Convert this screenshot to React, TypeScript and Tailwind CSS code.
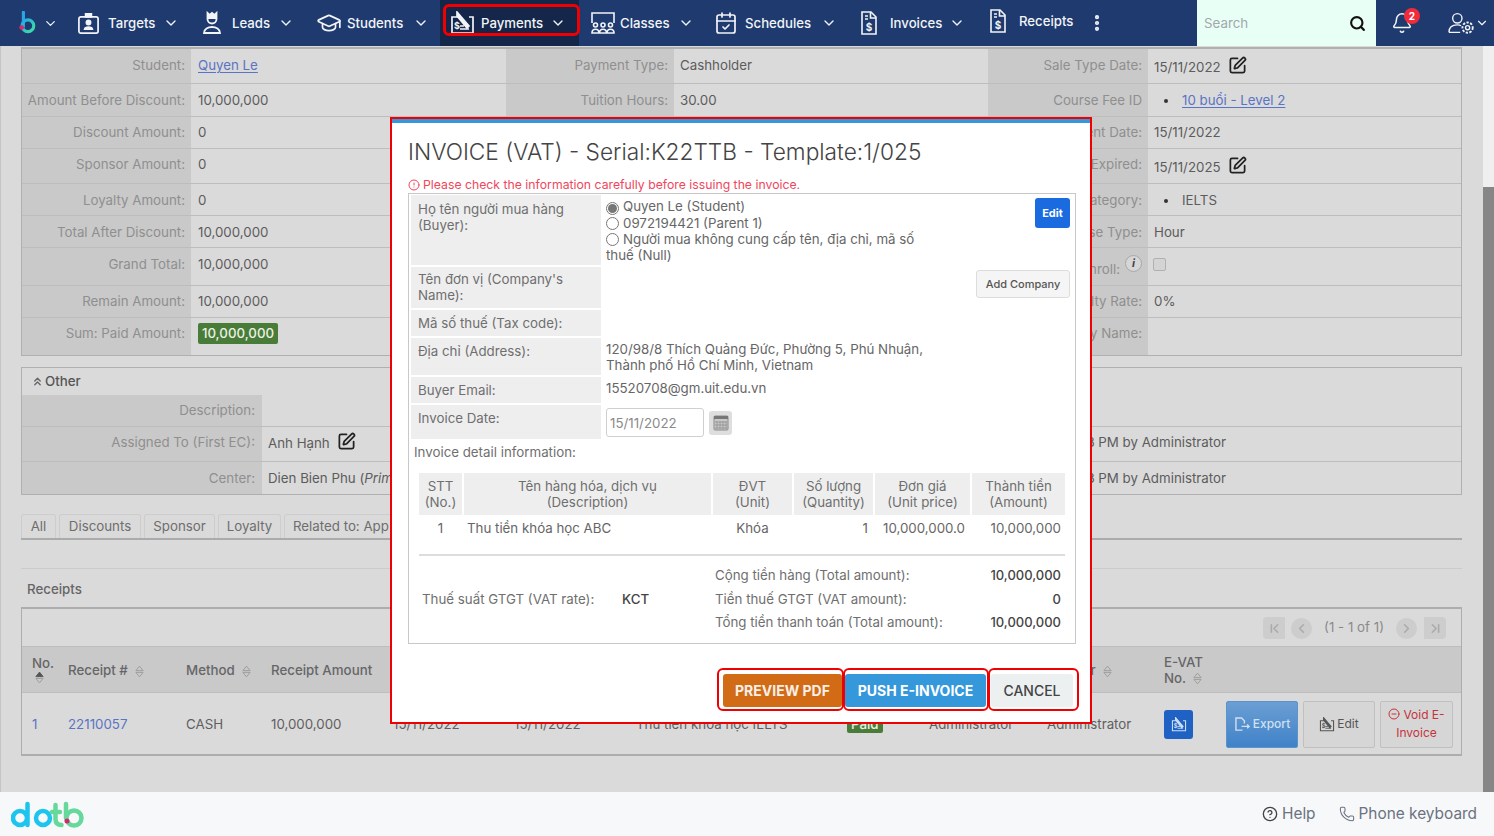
import type { ReactNode } from "react";
import {
  CalendarCheck,
  ChevronDown,
  ChevronFirst,
  ChevronLast,
  ChevronLeft,
  ChevronRight,
  ChevronsUp,
  CircleAlert,
  CircleHelp,
  CircleMinus,
  EllipsisVertical,
  GraduationCap,
  Phone,
  Search,
  Bell,
  SquarePen,
} from "lucide-react";

function BadgeIcon() {
  return (
    <svg viewBox="0 0 24 24" className="h-[23px] w-[23px]" fill="none" stroke="currentColor" strokeWidth="1.8">
      <rect x="2" y="5" width="20" height="17" rx="2" />
      <path d="M9 5V2h6v3z" fill="currentColor" />
      <circle cx="12" cy="11" r="2.2" fill="currentColor" />
      <path d="M8 18c.5-3 7.500-3 8 0z" fill="currentColor" />
    </svg>
  );
}

function LeadIcon() {
  return (
    <svg viewBox="0 0 20 24" className="h-[24px] w-[20px]" fill="none" stroke="currentColor" strokeWidth="1.8">
      <path d="M5.500 2l2 2 2.500-2 2.500 2 2-2v5h-9z" fill="currentColor" />
      <path d="M5.500 8c0 6 9 6 9 0" />
      <path d="M2 22c0-8 16-8 16 0z" />
    </svg>
  );
}

function PaymentIcon({ className = "h-[24px] w-[25px]" }: { className?: string }) {
  return (
    <svg viewBox="0 0 25 24" className={className} fill="none" stroke="currentColor" strokeWidth="1.7">
      <path d="M8 6H2v16h21V6h-4" />
      <path d="M7 1l12 14-2 2L7 5z" fill="currentColor" />
      <text x="4" y="18" fontSize="9" fontWeight="700" fill="currentColor" stroke="none">$</text>
      <path d="M10 15h4M10 18h9" strokeWidth="1.4" />
    </svg>
  );
}

function ClassIcon() {
  return (
    <svg viewBox="0 0 24 24" className="h-[24px] w-[24px]" fill="none" stroke="currentColor" strokeWidth="1.600">
      <path d="M1 12V2h22v10" />
      <circle cx="4.500" cy="14" r="2" />
      <circle cx="12" cy="14" r="2" />
      <circle cx="19.500" cy="14" r="2" />
      <path d="M1 22c0-5 7-5 7 0zM8.500 22c0-5 7-5 7 0zM16 22c0-5 7-5 7 0z" />
    </svg>
  );
}

function BillIcon() {
  return (
    <svg viewBox="0 0 16 24" className="h-[24px] w-[16px]" fill="none" stroke="currentColor" strokeWidth="1.600">
      <path d="M1 1h9l5 5v17H1z" />
      <path d="M9.500 1v6h5.500" />
      <path d="M4 5h3M4 8h3" />
      <text x="8" y="20" textAnchor="middle" fontSize="10" fontWeight="700" fill="currentColor" stroke="none">$</text>
    </svg>
  );
}

function SortIcon({ up = false }: { up?: boolean }) {
  return (
    <svg viewBox="0 0 10 14" className="h-[13px] w-[9px]">
      <path d="M5 1l4 5H1z" fill={up ? "#555" : "none"} stroke={up ? "#555" : "#9a9a9a"} strokeWidth="1" />
      <path d="M5 13l4-5H1z" fill="none" stroke="#9a9a9a" strokeWidth="1" />
    </svg>
  );
}

function UserGearIcon() {
  return (
    <svg viewBox="0 0 30 24" className="h-[24px] w-[28px]" fill="none" stroke="currentColor" strokeWidth="1.500">
      <circle cx="10" cy="7" r="5" />
      <path d="M1 22c0-6 4-8 9-8 2 0 3 .3 4 1M1 22h12" />
      <circle cx="21" cy="17" r="2.200" />
      <circle cx="21" cy="17" r="5.500" strokeDasharray="2.500 1.500" strokeWidth="2" />
    </svg>
  );
}

function NavLogo() {
  return (
    <svg viewBox="0 0 20 26" className="h-[24px] w-[18px]" fill="none">
      <defs>
        <linearGradient id="navb" x1="0" y1="0" x2="1" y2="1">
          <stop offset="0" stopColor="#22a8e8" />
          <stop offset="1" stopColor="#3fe0a0" />
        </linearGradient>
      </defs>
      <path d="M6 1v16" stroke="#2aa6e6" strokeWidth="3.500" strokeLinecap="round" />
      <circle cx="11" cy="16" r="6.500" stroke="url(#navb)" strokeWidth="3.500" />
      <circle cx="4" cy="18" r="2.600" fill="#d8246a" />
    </svg>
  );
}

function FooterLogo() {
  return (
    <svg viewBox="0 0 74 27" className="h-[27px] w-[74px]" fill="none" strokeWidth="4.500" strokeLinecap="round">
      <circle cx="9" cy="17" r="7" stroke="#1cc4ee" />
      <path d="M16.500 3v21" stroke="#1cc4ee" />
      <circle cx="32" cy="17" r="7" stroke="#1cc4ee" />
      <path d="M44.500 4v14c0 4 2 6 6 6M41 11h8" stroke="#66d89c" />
      <path d="M55 3v14" stroke="#66d89c" />
      <circle cx="63" cy="17" r="7.500" stroke="#66d89c" />
      <circle cx="56" cy="20" r="2.500" fill="#d8246a" stroke="none" />
    </svg>
  );
}

type NavItem = { label: string; icon: ReactNode; box: string; gap: string; chev: string; active?: boolean };

const NAV: NavItem[] = [
  { label: "Targets", icon: <BadgeIcon />, box: "w-[124px] pl-[11px]", gap: "ml-[8px] pt-[2px]", chev: "ml-[8px]" },
  { label: "Leads", icon: <LeadIcon />, box: "w-[115px] pl-[12px]", gap: "ml-[10px] pt-[2px]", chev: "ml-[8px]" },
  { label: "Students", icon: <GraduationCap size={26} strokeWidth={1.6} />, box: "w-[135px] pl-[11px]", gap: "ml-[5px] pt-[2px]", chev: "ml-[10px]" },
  { label: "Payments", icon: <PaymentIcon />, box: "w-[139px] pl-[10px] bg-[#14274a]", gap: "ml-[6px] pt-[2px]", chev: "ml-[7px]", active: true },
  { label: "Classes", icon: <ClassIcon />, box: "w-[125px] pl-[12px]", gap: "ml-[5px] pt-[2px]", chev: "ml-[8px]" },
  { label: "Schedules", icon: <CalendarCheck size={24} strokeWidth={1.7} />, box: "w-[144px] pl-[10px]", gap: "ml-[7px] pt-[2px]", chev: "ml-[10px]" },
  { label: "Invoices", icon: <BillIcon />, box: "w-[129px] pl-[13px]", gap: "ml-[13px] pt-[2px]", chev: "ml-[7px]" },
];

function Header() {
  return (
    <header className="flex h-[46px] shrink-0 items-stretch bg-[#1e3a6e] text-[#f2f4f8]">
      <div className="flex w-[66px] items-center pl-[18px]">
        <NavLogo />
        <ChevronDown size={15} className="ml-[7px]" />
      </div>
      {NAV.map((item) => (
        <div key={item.label} className={`relative flex items-center text-[13.200px] font-medium ${item.box}`}>
          {item.icon}
          <span className={item.gap}>{item.label}</span>
          <ChevronDown size={16} className={item.chev} />
          {item.active && (
            <div className="absolute top-[4px] left-[3px] h-[32px] w-[137px] rounded-[6px] border-[3px] border-[#f00000]" />
          )}
        </div>
      ))}
      <div className="flex w-[111px] items-center pb-[4px] pl-[13px] text-[13.200px] font-medium">
        <BillIcon />
        <span className="ml-[13px] pt-[2px]">Receipts</span>
      </div>
      <div className="flex w-[109px] items-center pb-[1px]">
        <EllipsisVertical size={20} strokeWidth={3} className="-ml-[1px]" />
      </div>
      <div className="flex w-[179px] items-center bg-[#e8fff5] pr-[10px] pl-[7px] text-[13.300px] text-[#a2a8ac]">
        <span className="flex-1 pt-[2px]">Search</span>
        <Search size={17} strokeWidth={3} className="text-[#111]" />
      </div>
      <div className="relative flex w-[72px] items-center pl-[15px]">
        <Bell size={22} strokeWidth={1.7} />
        <span className="absolute top-[8px] left-[28px] flex h-[16px] w-[16px] items-center justify-center rounded-full bg-[#ef2b3c] text-[10px] font-bold text-white">
          2
        </span>
      </div>
      <div className="flex flex-1 items-center">
        <UserGearIcon />
        <ChevronDown size={14} className="-ml-[1px]" />
      </div>
    </header>
  );
}

function EditMark() {
  return <SquarePen size={19} strokeWidth={2.2} className="ml-[7px] inline-block text-[#222]" />;
}

function Bullet({ children }: { children: ReactNode }) {
  return (
    <span className="flex items-center pl-[10px]">
      <span className="mr-[14px] h-[4px] w-[4px] rounded-full bg-[#333]" />
      {children}
    </span>
  );
}

const LINK = "text-[#5a74c4] underline underline-offset-2";

type SummaryRow = { h: string; t: string; a: [string, ReactNode]; b?: [string, ReactNode]; c: [ReactNode, ReactNode] };

const SUMMARY: SummaryRow[] = [
  {
    h: "h-[35px]",
    t: "pt-[8px]",
    a: ["Student:", <span className={LINK}>Quyen Le</span>],
    b: ["Payment Type:", "Cashholder"],
    c: ["Sale Type Date:", <span className="flex items-center pt-[2px]">15/11/2022<span className="-mt-[5px]"><EditMark /></span></span>],
  },
  {
    h: "h-[33px]",
    t: "pt-[8px]",
    a: ["Amount Before Discount:", "10,000,000"],
    b: ["Tuition Hours:", "30.00"],
    c: ["Course Fee ID", <Bullet><span className={LINK}>10 buổi - Level 2</span></Bullet>],
  },
  { h: "h-[32px]", t: "pt-[7px]", a: ["Discount Amount:", "0"], c: ["Payment Date:", "15/11/2022"] },
  {
    h: "h-[35px]",
    t: "pt-[7px]",
    a: ["Sponsor Amount:", "0"],
    c: ["Payment Expired:", <span className="flex items-center pt-[3px]">15/11/2025<span className="-mt-[5px]"><EditMark /></span></span>],
  },
  { h: "h-[32px]", t: "pt-[8px]", a: ["Loyalty Amount:", "0"], c: ["Course Category:", <Bullet>IELTS</Bullet>] },
  { h: "h-[32px]", t: "pt-[8px]", a: ["Total After Discount:", "10,000,000"], c: ["Course Type:", "Hour"] },
  {
    h: "h-[38px]",
    t: "pt-[8px]",
    a: ["Grand Total:", "10,000,000"],
    c: [
      <span className="flex items-start">
        <span className="mt-[5px]">Is Enroll:</span>
        <span className="-mt-[1px] ml-[5px] flex h-[17px] w-[17px] items-center justify-center rounded-full border border-[#a8a8a8] bg-[#d6d6d6] text-[11px] font-bold text-[#444] italic">
          i
        </span>
      </span>,
      <span className="mt-[2px] -ml-[1px] block h-[13px] w-[13px] rounded-[2px] border border-[#b0b0b0] bg-[#d4d4d4]" />,
    ],
  },
  { h: "h-[32px]", t: "pt-[7px]", a: ["Remain Amount:", "10,000,000"], c: ["Loyalty Rate:", "0%"] },
  {
    h: "h-[37px]",
    t: "pt-[7px]",
    a: [
      "Sum: Paid Amount:",
      <span className="-mt-[2px] block w-[80px] rounded-[2px] bg-[#4a7c39] py-[2px] text-center font-medium text-[#eaf2e4]">10,000,000</span>,
    ],
    c: ["Company Name:", ""],
  },
];

function Pair({ label, value, labelW, valueW, pad, top }: { label: ReactNode; value: ReactNode; labelW: string; valueW: string; pad: string; top: string }) {
  return (
    <>
      <div className={`flex items-start justify-end bg-[#c9c9c9] pr-[6px] leading-[17px] text-[#8f8f8f] ${top} ${labelW}`}>{label}</div>
      <div className={`leading-[17px] text-[#5c5c5c] ${top} ${pad} ${valueW}`}>{value}</div>
    </>
  );
}

function SummaryPanel() {
  return (
    <div className="mt-[1px] flex flex-col border-t-2 border-r border-b border-l border-[#b0b0b0]">
      {SUMMARY.map((row) => (
        <div key={row.a[0]} className={`flex border-b border-[#bdbdbd] last:border-b-0 ${row.h}`}>
          <Pair top={row.t} label={row.a[0]} value={row.a[1]} labelW="w-[169px]" valueW="w-[315px]" pad="pl-[7px]" />
          <Pair top={row.t} label={row.b?.[0] ?? ""} value={row.b?.[1] ?? ""} labelW="w-[168px]" valueW="w-[314px]" pad="pl-[6px]" />
          <Pair top={row.t} label={row.c[0]} value={row.c[1]} labelW="w-[160px]" valueW="flex-1" pad="pl-[6px]" />
        </div>
      ))}
    </div>
  );
}

const OTHER: { label: string; value: ReactNode; audit?: string; h: string; shift: string }[] = [
  { label: "Description:", value: "", h: "h-[32px]", shift: "" },
  {
    label: "Assigned To (First EC):",
    value: (
      <span className="flex items-center pt-[3px]">
        Anh Hạnh<span className="-mt-[5px]"><EditMark /></span>
      </span>
    ),
    audit: "3 PM by Administrator",
    h: "h-[35px]",
    shift: "pb-[3px]",
  },
  {
    label: "Center:",
    value: (
      <span>
        Dien Bien Phu (<em>Prim</em>
      </span>
    ),
    audit: "3 PM by Administrator",
    h: "h-[32px]",
    shift: "pt-[1px]",
  },
];

function OtherPanel() {
  return (
    <div className="mt-[11px] border border-[#b0b0b0]">
      <div className="flex h-[27px] items-center pl-[9px] font-medium text-[#555]">
        <ChevronsUp size={13} strokeWidth={2.5} className="text-[#666]" />
        <span className="ml-[1px]">Other</span>
      </div>
      {OTHER.map((row) => (
        <div key={row.label} className={`flex border-b border-[#bdbdbd] last:border-b-0 ${row.h}`}>
          <div className={`flex w-[240px] items-center justify-end bg-[#c9c9c9] pr-[7px] text-[#8f8f8f] ${row.shift}`}>{row.label}</div>
          <div className={`flex w-[400px] items-center pl-[6px] text-[#5c5c5c] ${row.shift}`}>{row.value}</div>
          <div className={`flex flex-1 items-center justify-end pr-[235px] text-[#5c5c5c] ${row.shift}`}>{row.audit}</div>
        </div>
      ))}
    </div>
  );
}

const TABS = [
  { label: "All", w: "w-[35px] justify-center" },
  { label: "Discounts", w: "w-[82px] justify-center" },
  { label: "Sponsor", w: "w-[71px] justify-center" },
  { label: "Loyalty", w: "w-[63px] justify-center" },
  { label: "Related to: App", w: "w-[190px] pl-[8px]" },
];

function Tabs() {
  return (
    <div className="mt-[19px] flex h-[26px] items-stretch gap-[3px] border-b-2 border-[#ababab]">
      {TABS.map((t) => (
        <div
          key={t.label}
          className={`flex items-center rounded-t-[3px] border-t border-r border-l border-[#cdcdcd] pt-[1px] whitespace-nowrap text-[#6e6e6e] ${t.w}`}
        >
          {t.label}
        </div>
      ))}
    </div>
  );
}

function HeadCell({ w, children, sort, up }: { w: string; children: ReactNode; sort?: boolean; up?: boolean }) {
  return (
    <div className={`flex shrink-0 items-center gap-[7px] pt-[4px] pl-[8px] font-medium text-[#666] ${w}`}>
      <span className="whitespace-nowrap">{children}</span>
      {sort && <SortIcon up={up} />}
    </div>
  );
}

function ReceiptsTable() {
  return (
    <div className="mt-[7px] border-t-2 border-r border-b-2 border-l border-[#adadad]">
      <div className="flex h-[38px] items-center justify-end border-b border-[#bdbdbd] pt-[2px] pr-[15px] text-[#8a8a8a]">
        <span className="flex h-[22px] w-[22px] items-center justify-center rounded-l-[4px] bg-[#cdcdcd] text-[#aaa]"><ChevronFirst size={15} strokeWidth={2.5} /></span>
        <span className="ml-[6px] flex h-[21px] w-[21px] items-center justify-center rounded-full bg-[#cdcdcd] text-[#aaa]"><ChevronLeft size={15} strokeWidth={2.5} /></span>
        <span className="mx-[12px]">(1 - 1 of 1)</span>
        <span className="flex h-[21px] w-[21px] items-center justify-center rounded-full bg-[#cdcdcd] text-[#aaa]"><ChevronRight size={15} strokeWidth={2.5} /></span>
        <span className="ml-[7px] flex h-[22px] w-[22px] items-center justify-center rounded-r-[4px] bg-[#cdcdcd] text-[#aaa]"><ChevronLast size={15} strokeWidth={2.5} /></span>
      </div>
      <div className="flex h-[46px] border-b border-[#bdbdbd] bg-[#c9c9ca]">
        <div className="flex w-[38px] shrink-0 flex-col pt-[8px] pl-[10px] leading-[16px] font-medium text-[#666]">
          No.
          <span className="pl-[3px]"><SortIcon up /></span>
        </div>
        <HeadCell w="w-[118px]" sort>Receipt #</HeadCell>
        <HeadCell w="w-[85px]" sort>Method</HeadCell>
        <HeadCell w="w-[122px]">Receipt Amount</HeadCell>
        <HeadCell w="w-[121px]">Receipt Date</HeadCell>
        <HeadCell w="w-[122px]">Paid Date</HeadCell>
        <HeadCell w="w-[211px]">Description</HeadCell>
        <HeadCell w="w-[82px]">Status</HeadCell>
        <HeadCell w="w-[118px]">Created By</HeadCell>
        <HeadCell w="w-[117px]" sort>Cashier</HeadCell>
        <div className="flex w-[62px] shrink-0 flex-col justify-center pt-[2px] pl-[8px] leading-[16px] font-medium text-[#666]">
          E-VAT
          <span className="flex items-center gap-[7px]">No. <SortIcon /></span>
        </div>
      </div>
      <div className="flex h-[61px] items-center pt-[4px] text-[#5f5f5f]">
        <div className="w-[38px] shrink-0 pl-[10px] text-[#5a74c4]">1</div>
        <div className="w-[118px] shrink-0 pl-[8px] text-[#5a74c4]">22110057</div>
        <div className="w-[85px] shrink-0 pl-[8px]">CASH</div>
        <div className="w-[122px] shrink-0 pl-[8px]">10,000,000</div>
        <div className="w-[121px] shrink-0 pl-[8px]">15/11/2022</div>
        <div className="w-[122px] shrink-0 pl-[8px]">15/11/2022</div>
        <div className="w-[211px] shrink-0 pl-[8px]">Thu tiền khóa học IELTS</div>
        <div className="w-[82px] shrink-0 pl-[8px]">
          <span className="rounded-[2px] bg-[#4a7c39] px-[4px] py-[1px] font-medium text-[#eaf2e4]">Paid</span>
        </div>
        <div className="w-[118px] shrink-0 pl-[8px]">Administrator</div>
        <div className="w-[117px] shrink-0 pl-[8px]">Administrator</div>
        <div className="-mt-[2px] w-[70px] shrink-0 pl-[8px]">
          <span className="flex h-[29px] w-[29px] items-center justify-center rounded-[3px] bg-[#1f62c4] text-[#cfe0f5]">
            <PaymentIcon className="h-[15px] w-[16px]" />
          </span>
        </div>
        <button className="-mt-[2px] flex h-[47px] w-[72px] items-center justify-center gap-[2px] rounded-[2px] border border-[#5d93cc] bg-gradient-to-b from-[#6b9ed4] to-[#3f82c8] text-[12px] font-medium text-[#cfe0f3]">
          <svg viewBox="0 0 18 16" className="h-[15px] w-[17px]" fill="none" stroke="currentColor" strokeWidth="1.500">
            <path d="M9 14H2V1h6l3 3v3" />
            <path d="M8 10h8M14 8l2 2-2 2" />
          </svg>
          Export
        </button>
        <button className="-mt-[2px] ml-[5px] flex h-[47px] w-[72px] items-center justify-center gap-[2px] rounded-[2px] border border-[#c0c0c0] bg-[#d6d6d6] text-[12px] text-[#555]">
          <PaymentIcon className="h-[15px] w-[16px]" />
          Edit
        </button>
        <button className="-mt-[2px] ml-[5px] h-[47px] w-[73px] rounded-[2px] border border-[#c0c0c0] bg-[#d6d6d6] text-[12px] leading-[18px] text-[#c4343c]">
          <CircleMinus size={12} className="mr-[3px] inline-block align-[-1px]" />
          Void E-<br />Invoice
        </button>
      </div>
    </div>
  );
}

function BuyerField({ label, h, first, children }: { label: ReactNode; h: string; first?: boolean; children?: ReactNode }) {
  return (
    <div className={`flex ${first ? "mt-[1px]" : "mt-[2px]"} ${h}`}>
      <div className="w-[190px] shrink-0 bg-[#eeeeee] pt-[5px] pl-[7px] leading-[16px] text-[#6f6f6f]">{label}</div>
      <div className="relative flex-1 pl-[5px] leading-[16px] text-[#666]">{children}</div>
    </div>
  );
}

function Radio({ on = false }: { on?: boolean }) {
  return (
    <span className="mr-[4px] inline-flex h-[13px] w-[13px] items-center justify-center rounded-full border border-[#777] align-[-2px]">
      {on && <span className="h-[9px] w-[9px] rounded-full bg-[#777]" />}
    </span>
  );
}

const DETAIL_HEAD: [string, string, string][] = [
  ["w-[43px]", "STT", "(No.)"],
  ["w-[247px]", "Tên hàng hóa, dịch vụ", "(Description)"],
  ["w-[79px]", "ĐVT", "(Unit)"],
  ["w-[79px]", "Số lượng", "(Quantity)"],
  ["w-[95px]", "Đơn giá", "(Unit price)"],
  ["flex-1", "Thành tiền", "(Amount)"],
];

function InvoiceModal() {
  return (
    <div className="absolute top-[117px] left-[390px] flex h-[607px] w-[702px] flex-col border-2 border-[#f00000] bg-white">
      <div className="h-[4px] shrink-0 bg-[#3498db]" />
      <div className="px-[16px]">
        <h2 className="mt-[14px] text-[22.700px] leading-[30px] font-light whitespace-nowrap text-[#444]">
          INVOICE (VAT) - Serial:K22TTB - Template:1/025
        </h2>
        <p className="mt-[10px] flex items-center gap-[3px] text-[12.250px] leading-[16px] text-[#f0465c]">
          <CircleAlert size={12} />
          Please check the information carefully before issuing the invoice.
        </p>
        <div className="h-[451px] w-[668px] border border-[#c8c8c8] px-[2px]">
          <BuyerField first label={<span className="block mt-[1px]">Họ tên người mua hàng<br />(Buyer):</span>} h="h-[70px]">
            <div className="w-[320px] pt-[3px]">
              <Radio on />Quyen Le (Student)<br />
              <Radio />0972194421 (Parent 1)<br />
              <Radio />Người mua không cung cấp tên, địa chỉ, mã số thuế (Null)
            </div>
            <button className="absolute top-[3px] right-[3px] h-[30px] w-[35px] rounded-[3px] bg-[#1a6ae0] text-[11px] font-bold text-white">
              Edit
            </button>
          </BuyerField>
          <BuyerField label={<span className="block -mt-[1px]">Tên đơn vị (Company's<br />Name):</span>} h="h-[41px]">
            <button className="absolute top-[3px] right-[3px] h-[28px] w-[94px] rounded-[3px] border border-[#ddd] bg-[#f5f5f5] text-[11px] font-medium text-[#555]">
              Add Company
            </button>
          </BuyerField>
          <BuyerField label="Mã số thuế (Tax code):" h="h-[26px]" />
          <BuyerField label="Địa chỉ (Address):" h="h-[37px]">
            <div className="w-[330px] pt-[3px]">120/98/8 Thích Quảng Đức, Phường 5, Phú Nhuận, Thành phố Hồ Chí Minh, Vietnam</div>
          </BuyerField>
          <BuyerField label="Buyer Email:" h="h-[26px]">
            <div className="pt-[3px]">15520708@gm.uit.edu.vn</div>
          </BuyerField>
          <BuyerField label="Invoice Date:" h="h-[34px]">
            <div className="flex items-start pt-[3px]">
              <div className="flex h-[29px] w-[98px] items-center rounded-[3px] border border-[#cfcfcf] pl-[3px] text-[#8a8a8a]">15/11/2022</div>
              <div className="mt-[3px] ml-[5px] flex h-[24px] w-[23px] items-center justify-center rounded-[3px] bg-[#dedede]">
                <svg viewBox="0 0 16 16" className="h-[16px] w-[16px]">
                  <rect x="1" y="1" width="14" height="14" rx="1" fill="#c8c8c8" stroke="#8a8a8a" />
                  <rect x="1" y="1" width="14" height="3" fill="#777" />
                  <path d="M4 6v8M7 6v8M10 6v8M13 6v8M2 7h12M2 10h12M2 13h12" stroke="#8f8f8f" strokeWidth="0.8" />
                </svg>
              </div>
            </div>
          </BuyerField>
          <p className="mt-[5px] pl-[3px] leading-[16px] text-[#6f6f6f]">Invoice detail information:</p>
          <div className="mx-[8px] mt-[13px]">
            <div className="flex gap-[2px] text-center leading-[16px] text-[#6f6f6f]">
              {DETAIL_HEAD.map(([w, a, b]) => (
                <div key={a} className={`h-[42px] bg-[#eeeeee] pt-[5px] ${w}`}>
                  {a}<br />{b}
                </div>
              ))}
            </div>
            <div className="flex h-[39px] items-start gap-[2px] pt-[5px] leading-[16px] text-[#666]">
              <div className="w-[43px] text-center">1</div>
              <div className="w-[247px] pl-[3px]">Thu tiền khóa học ABC</div>
              <div className="w-[79px] text-center">Khóa</div>
              <div className="w-[79px] pr-[5px] text-right">1</div>
              <div className="w-[95px] pr-[5px] text-right">10,000,000.0</div>
              <div className="flex-1 pr-[4px] text-right">10,000,000</div>
            </div>
            <div className="h-[2px] bg-[#dddddd]" />
            <div className="flex h-[72px] items-center pt-[13px] leading-[16px] text-[#6f6f6f]">
              <div className="w-[203px] pl-[3px]">Thuế suất GTGT (VAT rate):</div>
              <div className="w-[93px] font-medium text-[#444]">KCT</div>
              <div className="flex-1">
                <div className="flex h-[24px] items-center justify-between pr-[4px]">
                  Cộng tiền hàng (Total amount):<span className="text-[13px] font-medium text-[#444]">10,000,000</span>
                </div>
                <div className="flex h-[23px] items-center justify-between pr-[4px]">
                  Tiền thuế GTGT (VAT amount):<span className="text-[13px] font-medium text-[#444]">0</span>
                </div>
                <div className="flex h-[24px] items-center justify-between pr-[4px]">
                  Tổng tiền thanh toán (Total amount):<span className="text-[13px] font-medium text-[#444]">10,000,000</span>
                </div>
              </div>
            </div>
          </div>
        </div>
        <div className="mt-[24px] -mr-[5px] flex justify-end">
          <div className="rounded-[6px] border-2 border-[#f00000] pt-[4px] pb-[2px] pl-[4px]">
            <button className="h-[33px] w-[119px] rounded-[3px] bg-[#d16b16] text-[14px] font-bold text-[#f8efe6]">PREVIEW PDF</button>
          </div>
          <div className="-ml-[1px] rounded-[6px] border-2 border-[#f00000] pt-[4px] pr-[1px] pb-[2px]">
            <button className="h-[33px] w-[141px] rounded-[3px] bg-[#3498db] text-[14px] font-bold text-white">PUSH E-INVOICE</button>
          </div>
          <div className="-ml-[1px] rounded-[6px] border-2 border-[#f00000] pt-[4px] pr-[4px] pb-[2px] pl-[1px]">
            <button className="h-[33px] w-[82px] rounded-[3px] bg-[#ecf0f1] text-[14px] font-medium text-[#444]">CANCEL</button>
          </div>
        </div>
      </div>
    </div>
  );
}

function Footer() {
  return (
    <footer className="flex h-[44px] shrink-0 items-center justify-between bg-[#f7f8fa] pr-[17px] pl-[11px] text-[15.400px] text-[#6b7280]">
      <FooterLogo />
      <div className="flex items-center">
        <CircleHelp size={16} strokeWidth={2} className="mr-[4px] text-[#444]" />
        Help
        <Phone size={16} strokeWidth={1.600} className="mr-[4px] ml-[23px]" />
        Phone keyboard
      </div>
    </footer>
  );
}

export default function App() {
  return (
    <div className="relative flex h-[836px] w-[1494px] flex-col overflow-hidden bg-[#dadada] font-[Inter,sans-serif] text-[13.300px]">
      <Header />
      <div className="flex min-h-0 flex-1">
        <main className="min-w-0 flex-1 border-l border-[#c4c4c4] pr-[21px] pl-[20px]">
          <SummaryPanel />
          <OtherPanel />
          <Tabs />
          <div className="mt-[28px] border-t border-[#cbcbcb] pt-[11px] pl-[6px] font-medium text-[#666]">Receipts</div>
          <ReceiptsTable />
        </main>
        <div className="flex w-[11px] shrink-0 flex-col bg-[#868686]">
          <div className="h-[141px] bg-[#efefef]" />
        </div>
      </div>
      <Footer />
      <InvoiceModal />
    </div>
  );
}
